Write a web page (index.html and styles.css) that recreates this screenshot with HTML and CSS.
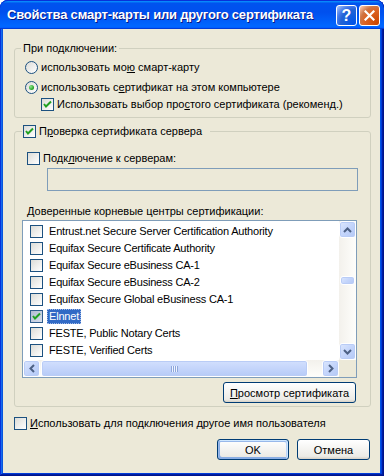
FILE: index.html
```html
<!DOCTYPE html>
<html lang="ru">
<head>
<meta charset="utf-8">
<title>Свойства смарт-карты или другого сертификата</title>
<link rel="stylesheet" href="styles.css">
</head>
<body>
<div class="window">
  <div class="titlebar">
    <span class="title">Свойства смарт-карты или другого сертификата</span>
    <div class="tb-buttons">
      <span class="tb-btn help">?</span>
      <span class="tb-btn close"><svg width="11" height="11" viewBox="0 0 11 11"><path d="M1.5 1.5 L9.5 9.5 M9.5 1.5 L1.5 9.5" stroke="#fff" stroke-width="2.2" stroke-linecap="square"/></svg></span>
    </div>
  </div>
  <div class="client">
    <fieldset class="group g1">
      <legend class="legend">При подключении:</legend>
      <div class="row row-radio1"><span class="radio"></span><span class="lbl">использовать мо<u>ю</u> смарт-карту</span></div>
      <div class="row row-radio2"><span class="radio on"><span class="dot"></span></span><span class="lbl">использовать с<u>е</u>ртификат на этом компьютере</span></div>
      <div class="row row-simple"><span class="check on"><svg width="11" height="11" viewBox="0 0 11 11"><polyline points="2,5 4,7.5 9,2.5" fill="none" stroke="#21A121" stroke-width="2"/></svg></span><span class="lbl">Использовать выбор про<u>с</u>того сертификата (рекоменд.)</span></div>
    </fieldset>

    <fieldset class="group g2">
      <legend class="legend legend-check"><span class="check on"><svg width="11" height="11" viewBox="0 0 11 11"><polyline points="2,5 4,7.5 9,2.5" fill="none" stroke="#21A121" stroke-width="2"/></svg></span><span class="lbl">П<u>р</u>оверка сертификата сервера</span></legend>
      <div class="row row-servers"><span class="check"></span><span class="lbl">Подк<u>л</u>ючение к серверам:</span></div>
      <div class="textbox"></div>
      <div class="list-label"><u>Д</u>оверенные корневые центры сертификации:</div>
      <div class="listbox">
        <div class="list-main">
          <div class="items">
            <div class="item"><span class="check"></span><span class="itext">Entrust.net Secure Server Certification Authority</span></div>
            <div class="item"><span class="check"></span><span class="itext">Equifax Secure Certificate Authority</span></div>
            <div class="item"><span class="check"></span><span class="itext">Equifax Secure eBusiness CA-1</span></div>
            <div class="item"><span class="check"></span><span class="itext">Equifax Secure eBusiness CA-2</span></div>
            <div class="item"><span class="check"></span><span class="itext">Equifax Secure Global eBusiness CA-1</span></div>
            <div class="item selected"><span class="check on hot"><svg width="11" height="11" viewBox="0 0 11 11"><polyline points="2,5 4,7.5 9,2.5" fill="none" stroke="#21A121" stroke-width="2"/></svg></span><span class="itext">Elnnet</span></div>
            <div class="item"><span class="check"></span><span class="itext">FESTE, Public Notary Certs</span></div>
            <div class="item"><span class="check"></span><span class="itext">FESTE, Verified Certs</span></div>
          </div>
          <div class="vscroll">
            <span class="sbtn"><svg width="9" height="6" viewBox="0 0 9 6"><polyline points="1,5 4.5,1.5 8,5" fill="none" stroke="#4D6185" stroke-width="2"/></svg></span>
            <div class="vtrack"><span class="vthumb"></span></div>
            <span class="sbtn"><svg width="9" height="6" viewBox="0 0 9 6"><polyline points="1,1 4.5,4.5 8,1" fill="none" stroke="#4D6185" stroke-width="2"/></svg></span>
          </div>
        </div>
        <div class="list-bottom">
          <div class="hscroll">
            <span class="sbtn"><svg width="6" height="9" viewBox="0 0 6 9"><polyline points="5,1 1.5,4.5 5,8" fill="none" stroke="#4D6185" stroke-width="2"/></svg></span>
            <div class="htrack"><span class="hthumb"><span class="grip"></span></span></div>
            <span class="sbtn"><svg width="6" height="9" viewBox="0 0 6 9"><polyline points="1,1 4.5,4.5 1,8" fill="none" stroke="#4D6185" stroke-width="2"/></svg></span>
          </div>
          <div class="corner"></div>
        </div>
      </div>
      <div class="btn-row"><button class="btn btn-view"><u>П</u>росмотр сертификата</button></div>
    </fieldset>

    <div class="row row-other"><span class="check"></span><span class="lbl"><u>И</u>спользовать для подключения другое имя пользователя</span></div>

    <div class="dialog-buttons">
      <button class="btn btn-ok focused">OK</button>
      <button class="btn btn-cancel">Отмена</button>
    </div>
  </div>
</div>
</body>
</html>
```

FILE: styles.css
```css
* { box-sizing: border-box; }
html, body { margin: 0; padding: 0; background: #ffffff; }
body {
  font-family: "Liberation Sans", Arial, sans-serif;
  font-size: 11px;
  color: #000;
}
u { text-decoration: underline; text-underline-offset: 1px; }

.window {
  width: 384px;
  height: 476px;
  display: flex;
  flex-direction: column;
  background: #0055E5;
  border-radius: 8px 8px 0 0;
  box-shadow: inset -1px -1px #00138c, inset 1px 1px #0831d9, inset -2px -2px #001ea0, inset 2px 2px #166aee, inset -3px -3px #003bda, inset 3px 3px #0855dd;
  overflow: hidden;
}

.titlebar {
  height: 29px;
  flex: 0 0 29px;
  display: flex;
  align-items: center;
  justify-content: space-between;
  padding: 0 4px 1px 7px;
  border-radius: 8px 8px 0 0;
  border-top: 1px solid #0831d9;
  background: linear-gradient(180deg, #0997ff, #0053ee 8%, #0050ee 40%, #0066ff 88%, #0066ff 93%, #005bff 95%, #003dd7 96%, #003dd7);
}
.title {
  color: #fff;
  font-family: "Liberation Sans", Arial, sans-serif;
  font-weight: bold;
  font-size: 13px;
  letter-spacing: -0.2px;
  text-shadow: 1px 1px #0a1883;
  white-space: nowrap;
}
.tb-buttons { display: flex; gap: 2px; margin-top: 2px; }
.tb-btn {
  width: 21px;
  height: 21px;
  border: 1px solid #fff;
  border-radius: 3px;
  display: flex;
  align-items: center;
  justify-content: center;
}
.help {
  background: radial-gradient(circle at 90% 90%, #0054e9 0%, #2263d5 55%, #4478e9 70%, #a0bdf4 95%);
  color: #fff;
  font-weight: bold;
  font-size: 16px;
  font-family: "Liberation Sans", Arial, sans-serif;
  line-height: 1;
}
.close {
  background: radial-gradient(circle at 90% 90%, #cc4600 0%, #dc6527 55%, #cd7546 70%, #ffccb2 98%);
}

.client {
  flex: 1;
  margin: 0 4px 3px 3px;
  background: #ECE9D8;
  padding: 13px 9px 0 11px;
  display: flex;
  flex-direction: column;
}

.group {
  margin: 0;
  padding: 0;
  border: 1px solid #D0D0BF;
  border-radius: 3px;
  width: 357px;
  min-width: 0;
}
.legend {
  margin-left: 6px;
  padding: 0 2px;
  line-height: 13px;
  height: 13px;
}
.legend-check {
  display: flex;
  align-items: center;
  height: 16px;
  line-height: 16px;
  margin-left: 7px;
  padding: 0 8px 0 1px;
}
.legend-check .check { margin-right: 3px; }

.row {
  display: flex;
  align-items: center;
  height: 16px;
  white-space: nowrap;
}
.g1 { height: 76px; }
.row-radio1 { margin: 4px 0 0 10px; }
.row-radio2 { margin: 4px 0 0 10px; }
.row-simple { margin: 1px 0 0 26px; }

.radio {
  width: 13px;
  height: 13px;
  border: 1px solid #1C5180;
  border-radius: 50%;
  background: linear-gradient(135deg, #DCDCD7 0%, #FFFFFF 100%);
  margin-right: 3px;
  display: flex;
  align-items: center;
  justify-content: center;
  flex: 0 0 13px;
}
.dot {
  width: 5px;
  height: 5px;
  border-radius: 50%;
  background: radial-gradient(circle at 35% 35%, #8ee68c 0%, #21A121 70%, #1a8a1a 100%);
}
.check {
  width: 13px;
  height: 13px;
  flex: 0 0 13px;
  border: 1px solid #1C5180;
  background: linear-gradient(135deg, #DCDCD7 0%, #FFFFFF 100%);
  display: flex;
  align-items: center;
  justify-content: center;
  margin-right: 3px;
}
.check.hot { background: linear-gradient(135deg, #B0BCD2 0%, #D6DEEC 100%); border-color: #2F5D8C; }

.g2 { margin-top: 5px; padding: 0 0 3px 0; }
.row-servers { margin: 11px 0 0 12px; }
.textbox {
  margin: 2px 12px 0 32px;
  height: 23px;
  border: 1px solid #7F9DB9;
  background: #ECE9D8;
}
.list-label {
  margin: 14px 0 0 12px;
  line-height: 13px;
  height: 13px;
  white-space: nowrap;
}
.listbox {
  margin: 2px 0 0 7px;
  width: 335px;
  height: 158px;
  border: 1px solid #7F9DB9;
  background: #fff;
  display: flex;
  flex-direction: column;
}
.list-main { display: flex; height: 139px; }
.items { flex: 1; padding-top: 2px; overflow: hidden; }
.item {
  height: 17px;
  display: flex;
  align-items: center;
  padding-left: 7px;
  white-space: nowrap;
}
.item .check { margin-right: 4px; }
.itext { padding: 1px 2px; line-height: 13px; letter-spacing: -0.2px; }
.item.selected .itext {
  background: #316AC5;
  color: #fff;
  outline: 1px dotted #9fb8e6;
  outline-offset: -1px;
}

.sbtn {
  width: 17px;
  height: 17px;
  flex: 0 0 17px;
  border: 1px solid #fff;
  border-radius: 3px;
  background: linear-gradient(135deg, #DCE7FD 0%, #C4D5FB 50%, #B3C8F5 100%);
  box-shadow: inset 0 0 0 1px #B9CCF6;
  display: flex;
  align-items: center;
  justify-content: center;
}
.vscroll {
  width: 17px;
  display: flex;
  flex-direction: column;
  background: linear-gradient(90deg, #F3F1EC, #FEFEFB);
}
.vtrack { flex: 1; display: flex; flex-direction: column; padding-top: 38px; }
.vthumb {
  height: 9px;
  margin: 0 1px;
  border: 1px solid #fff;
  border-radius: 3px;
  background: linear-gradient(135deg, #DCE7FD 0%, #C4D5FB 50%, #B3C8F5 100%);
  box-shadow: inset 0 0 0 1px #B9CCF6;
}
.list-bottom { display: flex; height: 17px; }
.hscroll {
  flex: 1;
  display: flex;
  background: linear-gradient(180deg, #F3F1EC, #FEFEFB);
}
.htrack { flex: 1; display: flex; padding: 0 14px 0 1px; }
.hthumb {
  flex: 1;
  border: 1px solid #fff;
  border-radius: 3px;
  background: linear-gradient(180deg, #D2DFFD 0%, #C4D5FB 50%, #B6CAF7 100%);
  box-shadow: inset 0 0 0 1px #B9CCF6;
  display: flex;
  align-items: center;
  justify-content: center;
}
.grip {
  width: 7px;
  height: 6px;
  background: repeating-linear-gradient(90deg, #8EA6DC 0 1px, #EEF4FE 1px 2px);
}
.corner { width: 17px; background: #ECE9D8; }

.btn {
  font-family: "Liberation Sans", Arial, sans-serif;
  font-size: 11px;
  color: #000;
  height: 21px;
  padding: 0;
  border: 1px solid #003c74;
  border-radius: 3px;
  background: linear-gradient(180deg, #fff, #ecebe6 86%, #d6d0c5);
}
.btn.focused {
  box-shadow: inset -1px 1px #cee7ff, inset 1px 2px #98b8ea, inset -2px 2px #bcd4f6, inset 1px -1px #89ade4, inset 2px -2px #89ade4;
}
.btn-row { display: flex; justify-content: flex-end; margin: 4px 14px 0 0; }
.btn-view { width: 133px; }

.row-other { margin: 8px 0 0 0; }

.dialog-buttons {
  display: flex;
  justify-content: flex-end;
  gap: 8px;
  margin: 8px 1px 0 0;
}
.btn-ok { width: 72px; }
.btn-cancel { width: 73px; }
```
